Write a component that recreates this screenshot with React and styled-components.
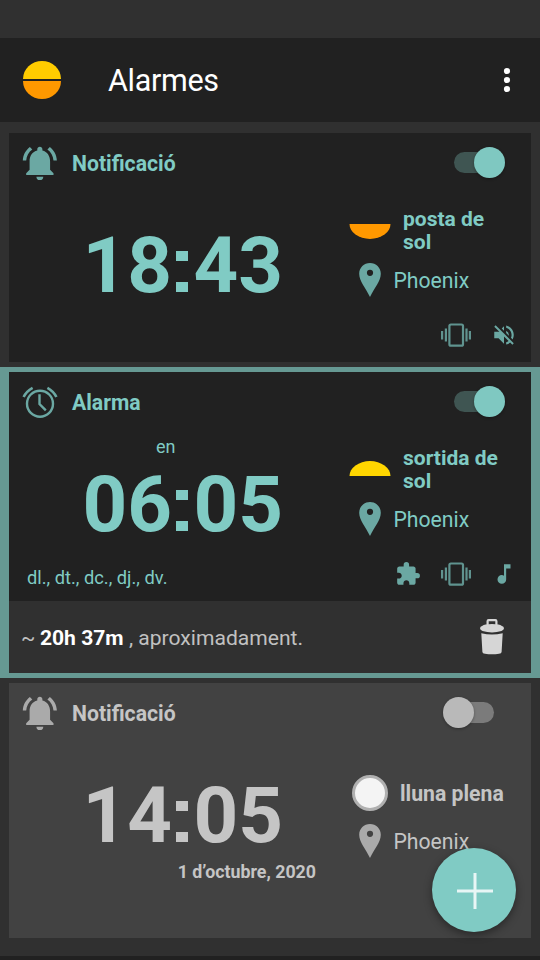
import React from 'react';
import styled, { createGlobalStyle } from 'styled-components';
import { MdVolumeOff, MdExtension, MdMusicNote } from 'react-icons/md';

const GlobalStyle = createGlobalStyle`
  * { box-sizing: border-box; }
  body { margin: 0; background: #303030; overflow: hidden; }
`;

const Screen = styled.div`
  position: relative;
  display: flex;
  flex-direction: column;
  width: 540px;
  height: 960px;
  overflow: hidden;
  background: #303030;
  font-family: Roboto, sans-serif;
  white-space: nowrap;
`;

const StatusBar = styled.div`
  flex: none;
  height: 38px;
`;

const Toolbar = styled.header`
  flex: none;
  display: flex;
  align-items: center;
  height: 84px;
  padding: 0 24px 0 22px;
  background: #212121;
`;

const Title = styled.h1`
  flex: 1;
  margin: 2px 0 0 46px;
  color: #fff;
  font-size: 30.5px;
  font-weight: 400;
  line-height: 36px;
  letter-spacing: -0.3px;
`;

const List = styled.main`
  flex: 1;
  display: flex;
  flex-direction: column;
  padding-top: 6px;
`;

const Item = styled.div`
  flex: none;
  padding: 5px 9px;
  background: ${(p) => (p.$selected ? '#669993' : 'transparent')};
`;

const Card = styled.article`
  height: ${(p) => (p.$off ? 255 : 229)}px;
  background: ${(p) => (p.$off ? '#424242' : '#212121')};
  color: ${(p) => (p.$off ? '#c5c5c5' : '#80cbc4')};
  --icon: ${(p) => (p.$off ? '#aaaaaa' : '#6ba8a3')};
  --digit: ${(p) => (p.$off ? '#c5c5c5' : '#80cbc4')};
`;

const CardHeader = styled.div`
  display: flex;
  align-items: center;
  height: 60px;
  padding: 0 26px 0 10px;
`;

const CardTitle = styled.h2`
  flex: 1;
  margin: 2px 0 0 12px;
  font-size: 21.2px;
  font-weight: 700;
  line-height: 24px;
`;

const Switch = styled.div`
  display: flex;
  align-items: center;
  width: 40px;
  height: 21px;
  margin: -1px 11px 0 0;
  border-radius: 11px;
  background: ${(p) => (p.$on ? '#3f5552' : '#7b7b7b')};
`;

const Thumb = styled.div`
  flex: none;
  width: 31px;
  height: 31px;
  margin-left: ${(p) => (p.$on ? 20 : -11)}px;
  border-radius: 50%;
  background: ${(p) => (p.$on ? '#7fc8c1' : '#b9b9b9')};
  box-shadow: 0 1px 3px rgba(0, 0, 0, 0.3);
`;

const CardBody = styled.div`
  display: flex;
  height: 121px;
`;

const TimeColumn = styled.div`
  width: 331px;
`;

const Note = styled.div`
  height: 30px;
  padding-left: 147px;
  font-size: 18px;
  line-height: 30px;
`;

const Time = styled.div`
  display: flex;
  height: 84px;
  padding-left: 73.5px;
  font-size: 78px;
  font-weight: 700;
  line-height: 86px;
`;

/* The separator is shown as two square dots. */
const Colon = styled.span`
  width: 21.5px;
  color: transparent;
  background:
    linear-gradient(var(--digit), var(--digit)) 4px 28px / 12px 10px no-repeat,
    linear-gradient(var(--digit), var(--digit)) 4px 59px / 12px 10px no-repeat;
`;

const Info = styled.div`
  flex: 1;
  padding-top: ${(p) => (p.$off ? 19 : 4)}px;
`;

const EventRow = styled.div`
  display: flex;
  align-items: center;
  height: ${(p) => (p.$off ? 62 : 66)}px;
  padding-left: ${(p) => (p.$off ? 12 : 9)}px;
  font-size: ${(p) => (p.$off ? 21.2 : 21)}px;
  font-weight: 700;
  line-height: 23px;
`;

const EventName = styled.span`
  width: 110px;
  margin: 1px 0 0 12px;
  white-space: normal;
`;

const PlaceRow = styled.div`
  display: flex;
  align-items: center;
  height: 34px;
  padding-left: 18px;
  font-size: 21.2px;
`;

const PlaceName = styled.span`
  margin: 1px 0 0 12.5px;
`;

const CardFooter = styled.div`
  display: flex;
  align-items: center;
  height: 42px;
  padding: 0 14px 0 18px;
  color: var(--icon);
`;

const Days = styled.span`
  flex: 1;
  margin-top: 6px;
  color: #80cbc4;
  font-size: 18.3px;
`;

const Actions = styled.div`
  display: flex;
  align-items: center;
  gap: 20px;
  margin-left: auto;
`;

const DateLabel = styled.div`
  width: 307px;
  font-size: 17.8px;
  font-weight: 700;
  line-height: 16px;
  text-align: right;
`;

const Detail = styled.div`
  display: flex;
  align-items: center;
  justify-content: space-between;
  height: 72px;
  padding: 0 26px 0 12px;
  background: #303030;
`;

const Remaining = styled.p`
  margin: 1px 0 0;
  color: #c1c1c1;
  font-size: 21.1px;
  white-space: pre;
`;

const Strong = styled.b`
  margin-left: -0.7px;
  color: #fff;
  font-weight: 700;
`;

const BottomEdge = styled.div`
  height: 4px;
  margin-top: auto;
  background: #212121;
`;

const Fab = styled.button`
  position: absolute;
  right: 24px;
  bottom: 28px;
  width: 84px;
  height: 84px;
  padding: 0;
  border: 0;
  border-radius: 50%;
  background: #80cbc4;
  box-shadow: 0 3px 9px rgba(0, 0, 0, 0.4);
`;

const Svg = styled.svg`
  display: block;
  flex: none;
`;

const Logo = () => (
  <Svg width="40" height="40" viewBox="0 0 40 40">
    <path d="M1 19a19 18 0 0 1 38 0z" fill="#ffcc00" />
    <path d="M1 21a19 18 0 0 0 38 0z" fill="#ff9800" />
  </Svg>
);

const MenuDots = () => (
  <Svg width="18" height="30" viewBox="0 0 18 30" fill="#fff">
    <circle cx="9" cy="6" r="3.1" />
    <circle cx="9" cy="15" r="3.1" />
    <circle cx="9" cy="24" r="3.1" />
  </Svg>
);

const Bell = () => (
  <Svg width="41" height="41" viewBox="-0.2 0.3 24 24" fill="var(--icon)">
    <path d="M7.58 4.08L6.15 2.65C3.75 4.48 2.17 7.3 2.03 10.5h2c.15-2.65 1.51-4.97 3.55-6.42zm12.39 6.42h2c-.15-3.2-1.73-6.02-4.12-7.85l-1.42 1.43c2.02 1.45 3.39 3.77 3.54 6.42zM18 11c0-3.07-1.64-5.64-4.5-6.32V4c0-.83-.67-1.5-1.5-1.5s-1.5.67-1.5 1.5v.68C7.63 5.36 6 7.92 6 11v5l-2 2v1h16v-1l-2-2v-5zM10 20a2 2 0 0 0 4 0z" />
  </Svg>
);

const Clock = () => (
  <Svg width="41" height="41" viewBox="0 0 41 41" fill="none" stroke="var(--icon)">
    <circle cx="21" cy="21.7" r="13" strokeWidth="2.4" />
    <path d="M20.5 12.3V22l6.3 6.3" strokeWidth="2.4" />
    <path d="M4.6 15Q7.5 9.1 13.6 5.8M37.4 15Q34.5 9.1 28.4 5.8" strokeWidth="2.6" />
  </Svg>
);

const Pin = () => (
  <Svg width="23" height="34" viewBox="0 0 23 34">
    <path fill="var(--icon)" fillRule="evenodd" d="M12 0C6 0 1.2 4.7 1.2 10.8C1.2 18 7.6 25 12 34C16.4 25 22.8 18 22.8 10.8C22.8 4.7 18 0 12 0zM12 6.7a3.1 3.1 0 1 1 0 6.2a3.1 3.1 0 0 1 0-6.2z" />
  </Svg>
);

const Vibration = () => (
  <Svg width="30" height="24" viewBox="0 0 30 24">
    <g fill="none" stroke="var(--icon)" strokeWidth="2.2" opacity=".85">
      <rect x="8.4" y="1.5" width="13.6" height="21.2" rx="1.5" />
      <path d="M1.1 8v8.5M4.9 5.5v13M25.5 5.5v13M28.9 8v8.5" />
    </g>
  </Svg>
);

const Trash = () => (
  <Svg width="26" height="36" viewBox="0 0 26 36" fill="#d6d6d6">
    <path d="M8.6 6V2.2Q8.6 1.2 9.6 1.2h6.8Q17.4 1.2 17.4 2.2V6" fill="none" stroke="#d6d6d6" strokeWidth="2.2" />
    <path d="M3.5 6.8Q5 5 13 5Q21 5 22.5 6.8Q25 7.5 25 9.3Q25 11 22.5 12Q13 14.8 3.5 12Q1 11 1 9.3Q1 7.5 3.5 6.8z" />
    <path d="M2.3 14.3Q13 16.8 23.7 14.3L22.6 33Q22.5 34.5 20 34.8Q13 35.8 6 34.8Q3.5 34.5 3.4 33z" />
  </Svg>
);

const SunHalf = ({ rising }) => (
  <Svg width="42" height="18" viewBox="0 0 42 18">
    {rising
      ? <path d="M.5 16a20.5 15 0 0 1 41 0z" fill="#ffd600" />
      : <path d="M.5 3a20.5 15 0 0 0 41 0z" fill="#ff9800" />}
  </Svg>
);

const Moon = () => (
  <Svg width="36" height="36" viewBox="0 0 36 36">
    <circle cx="18" cy="18" r="16.5" fill="#f4f4f4" stroke="#b0b0b0" strokeWidth="3" />
  </Svg>
);

const Plus = () => (
  <Svg width="84" height="84" viewBox="0 0 84 84">
    <path d="M25 43h36M43 25v36" stroke="#e8f6f5" strokeWidth="3" />
  </Svg>
);

function Alarm({ icon, title, note, time, event, eventIcon, place, off, selected, footer, detail }) {
  const [hours, minutes] = time.split(':');
  return (
    <Item $selected={selected}>
      <Card $off={off}>
        <CardHeader>
          {icon}
          <CardTitle>{title}</CardTitle>
          <Switch $on={!off}><Thumb $on={!off} /></Switch>
        </CardHeader>
        <CardBody>
          <TimeColumn>
            <Note>{note}</Note>
            <Time><span>{hours}</span><Colon>:</Colon><span>{minutes}</span></Time>
          </TimeColumn>
          <Info $off={off}>
            <EventRow $off={off}>{eventIcon}<EventName>{event}</EventName></EventRow>
            <PlaceRow><Pin /><PlaceName>{place}</PlaceName></PlaceRow>
          </Info>
        </CardBody>
        {footer}
      </Card>
      {detail}
    </Item>
  );
}

export default function App() {
  return (
    <Screen>
      <GlobalStyle />
      <StatusBar />
      <Toolbar>
        <Logo />
        <Title>Alarmes</Title>
        <MenuDots />
      </Toolbar>
      <List>
        <Alarm
          icon={<Bell />}
          title="Notificació"
          time="18:43"
          event="posta de sol"
          eventIcon={<SunHalf />}
          place="Phoenix"
          footer={<CardFooter><Actions><Vibration /><MdVolumeOff size={26} /></Actions></CardFooter>}
        />
        <Alarm
          selected
          icon={<Clock />}
          title="Alarma"
          note="en"
          time="06:05"
          event="sortida de sol"
          eventIcon={<SunHalf rising />}
          place="Phoenix"
          footer={
            <CardFooter>
              <Days>dl., dt., dc., dj., dv.</Days>
              <Actions><MdExtension size={26} /><Vibration /><MdMusicNote size={26} /></Actions>
            </CardFooter>
          }
          detail={
            <Detail>
              <Remaining>~ <Strong>20h 37m</Strong> , aproximadament.</Remaining>
              <Trash />
            </Detail>
          }
        />
        <Alarm
          off
          icon={<Bell />}
          title="Notificació"
          time="14:05"
          event="lluna plena"
          eventIcon={<Moon />}
          place="Phoenix"
          footer={<DateLabel>1 d’octubre, 2020</DateLabel>}
        />
        <BottomEdge />
      </List>
      <Fab aria-label="Afegeix"><Plus /></Fab>
    </Screen>
  );
}
